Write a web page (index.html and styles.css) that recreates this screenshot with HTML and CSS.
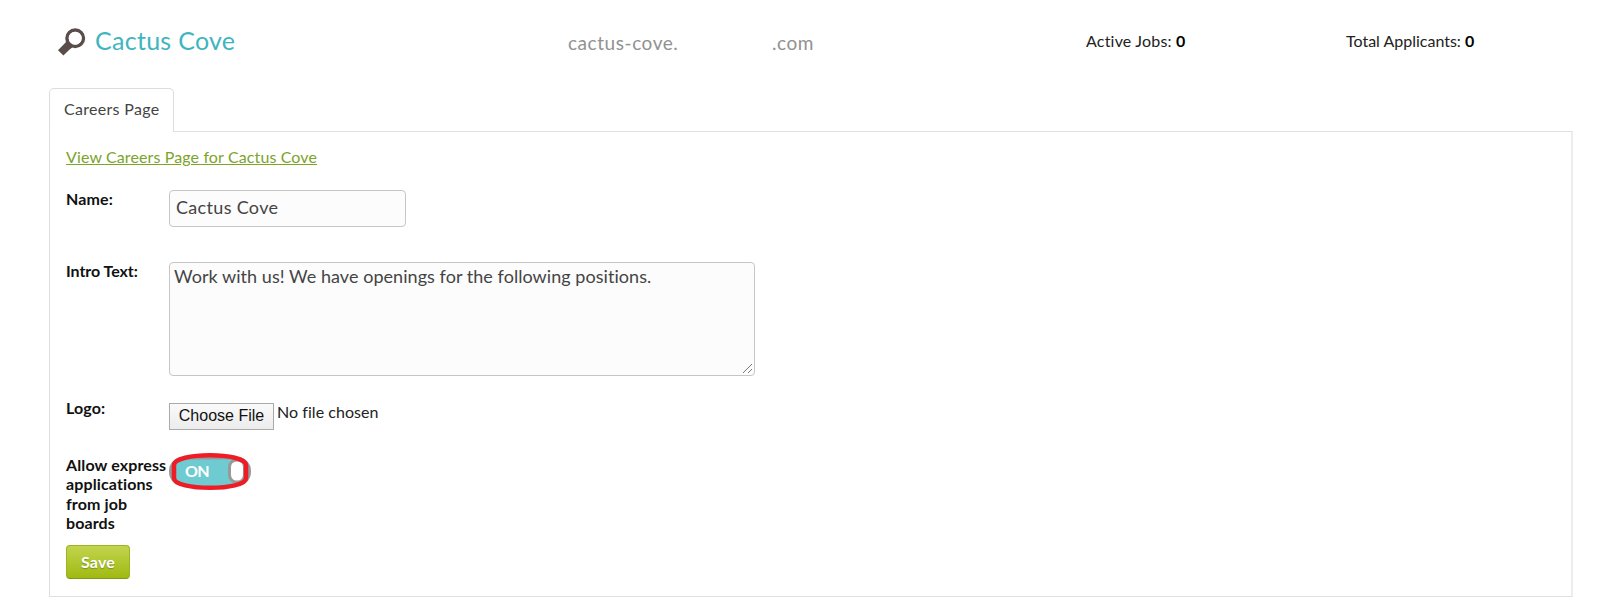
FILE: index.html
```html
<!DOCTYPE html>
<html lang="en">
<head>
<meta charset="utf-8">
<title>Cactus Cove</title>
<link rel="stylesheet" href="styles.css">
</head>
<body>
<header class="header">
  <svg class="search-icon" width="28" height="29" viewBox="0 0 28 29">
    <circle cx="17.2" cy="10.2" r="8.2" fill="none" stroke="#5b4c4c" stroke-width="3.6"/>
    <path d="M8.4 12.6 L15 19 L11.6 21.4 L5.4 27.6 L0 22.2 L7.6 14.6 Z" fill="#5b4c4c"/>
    <circle cx="17.2" cy="10.2" r="6.5" fill="#fff"/>
  </svg>
  <h1 class="title">Cactus Cove</h1>
  <div class="domain"><span>cactus-cove.</span><span>.com</span></div>
  <div class="stat jobs">Active Jobs: <b>0</b></div>
  <div class="stat applicants">Total Applicants: <b>0</b></div>
</header>
<nav class="tabs"><a class="tab">Careers Page</a></nav>
<main class="panel">
  <a class="view-link">View Careers Page for Cactus Cove</a>
  <form class="form">
    <div class="row name-row">
      <label class="label">Name:</label>
      <div class="field name-field">Cactus Cove</div>
    </div>
    <div class="row intro-row">
      <label class="label intro-label">Intro Text:</label>
      <div class="field intro-field">Work with us! We have openings for the following positions.
        <svg class="grip" width="11" height="11" viewBox="0 0 11 11"><path d="M1 10 L10 1 M6 10 L10 6" stroke="#777" fill="none"/></svg>
      </div>
    </div>
    <div class="row logo-row">
      <label class="label">Logo:</label>
      <div class="choose">Choose File</div>
      <div class="no-file">No file chosen</div>
    </div>
    <div class="row express-row">
      <label class="label express">Allow express<br>applications<br>from job<br>boards</label>
      <svg class="toggle" width="84" height="40" viewBox="0 0 84 40">
        <rect x="1" y="5" width="82" height="29" rx="14" fill="#999"/>
        <path d="M6 8 Q41 0 76 8 V31 Q41 38 6 31Z" fill="#6fcbd2"/>
        <path d="M16 6.500 H68" stroke="#999" stroke-width="2"/>
        <rect x="61.500" y="8" width="15" height="22" rx="7" fill="#fff" stroke="#999" stroke-width="3"/>
        <path d="M6 13 C6 0 78 0 78 13 V26 C78 39 6 39 6 26Z" fill="none" stroke="#ee1c25" stroke-width="4.500"/>
        <text class="toggle-text" x="17" y="25">ON</text>
      </svg>
    </div>
    <button class="save" type="button">Save</button>
  </form>
</main>
</body>
</html>
```
FILE: styles.css
```css
* { box-sizing: border-box; }
body { margin: 0; width: 1600px; height: 616px; background: #fff; font: 16px/19px Lato, sans-serif; font-variant-ligatures: none; letter-spacing: .12px; color: #222; overflow: hidden; }
.header { display: flex; height: 88px; padding-left: 58px; }
.search-icon { margin-top: 28px; flex: none; }
.title { margin: 25px 0 0 9px; width: 472px; font-size: 25px; line-height: 30px; font-weight: 400; letter-spacing: .28px; color: #3fb5c1; }
.domain { display: flex; justify-content: space-between; margin: 31px 0 0 1px; width: 246px; font-size: 19px; line-height: 24px; letter-spacing: .55px; color: #919191; }
.stat { margin-top: 31px; white-space: nowrap; }
.jobs { margin-left: 272px; width: 260px; letter-spacing: .2px; }
.applicants { letter-spacing: 0; }
b { color: #000; }
.tabs { padding-left: 49px; height: 43px; }
.tab { display: block; position: relative; width: 125px; height: 44px; padding: 10px 0 0 14px; border: 1px solid #ddd; border-bottom: 0; border-radius: 5px 5px 0 0; background: #fff; letter-spacing: .3px; color: #444; }
.panel { margin-left: 49px; width: 1524px; height: 466px; border: 1px solid #dfdfdf; border-width: 1px 2px 1px 1px; border-right-color: #ececec; padding: 15px 0 0 16px; }
.view-link { color: #7ba428; text-decoration: underline; display: block; height: 20px; letter-spacing: .12px; }
.row { display: flex; }
.label { width: 103px; margin-top: -1px; color: #111; font-weight: 700; flex: none; white-space: nowrap; }
.intro-label { letter-spacing: -.05px; }
.field { border: 1px solid #c6c6c6; border-radius: 4px; background: #fcfcfc; font-size: 18px; line-height: 22px; color: #444; }
.name-row { margin-top: 23px; height: 72px; }
.name-field { width: 237px; height: 37px; padding: 5px 0 0 6px; letter-spacing: .32px; }
.intro-row { height: 131px; }
.intro-field { position: relative; width: 586px; height: 114px; padding: 2px 0 0 4px; letter-spacing: .05px; }
.grip { position: absolute; right: 1px; bottom: 1px; }
.logo-row { height: 59px; padding-top: 6px; }
.choose { margin-top: 4px; width: 105px; height: 27px; border: 1px solid #aaa; background: linear-gradient(#fafafa, #ececec); font: 16px/24px "Liberation Sans", sans-serif; letter-spacing: 0; text-align: center; color: #111; }
.no-file { margin: 3px 0 0 3px; letter-spacing: .05px; }
.express-row { height: 93px; }
.express { margin-top: 3px; line-height: 19.33px; letter-spacing: .12px; }
.toggle { margin-left: -1px; }
.toggle-text { font: 700 16px Lato, sans-serif; letter-spacing: -.8px; fill: #fff; }
.save { display: block; width: 64px; height: 34px; padding: 0; border: 1px solid #9bb41f; border-bottom-color: #7f9a0c; border-radius: 4px; background: linear-gradient(#c2d44e, #a0ba12); color: #fff; font: 700 16px/30px Lato, sans-serif; letter-spacing: .2px; text-shadow: 0 1px 1px #7b8f20; }
```
